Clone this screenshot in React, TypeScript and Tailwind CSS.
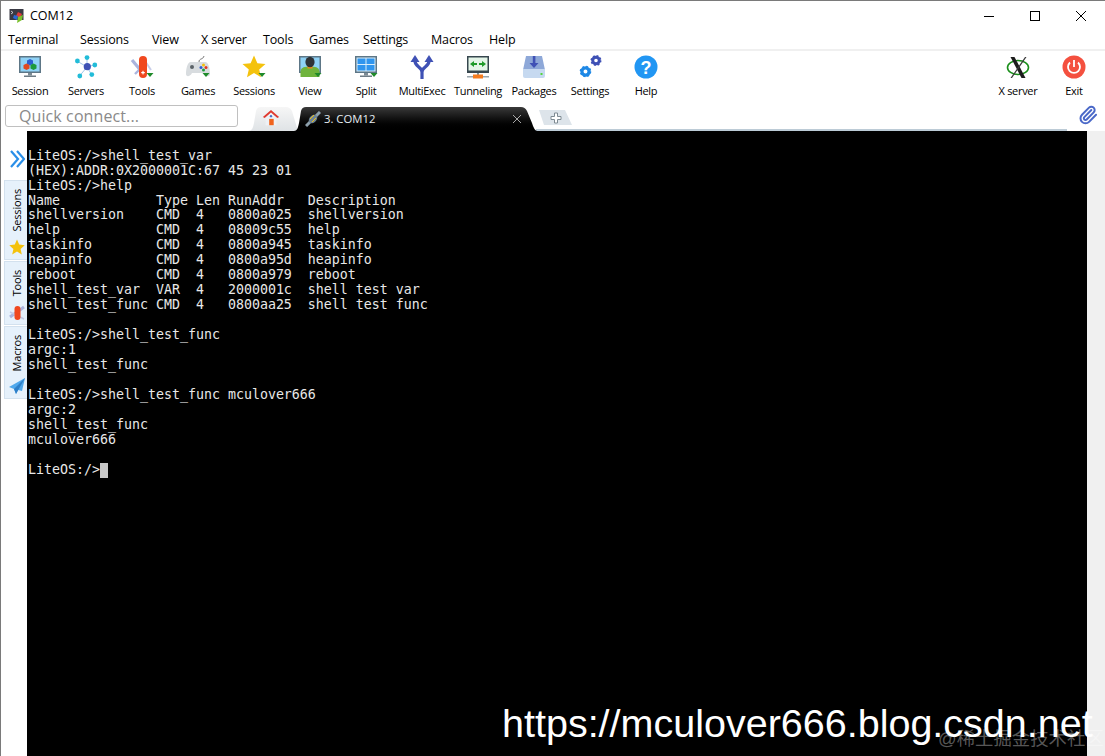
import { Paperclip } from 'lucide-react';
import type { ReactNode } from 'react';

const uiFont = "font-['Open_Sans','Noto_Sans',sans-serif]";

function Tri() {
  return <polygon points="18.5,20 25.5,20 22,24" fill="#1f8a2a" />;
}

function Monitor({ screen, children }: { screen: string; children?: ReactNode }) {
  return (
    <>
      <rect x="3" y="3" width="22" height="17" fill="#5d7686" />
      <rect x="4.5" y="4.5" width="19" height="14" fill={screen} />
      <rect x="12" y="20" width="4" height="2.5" fill="#7d8b94" />
      <rect x="8" y="22.5" width="12" height="1.5" fill="#6e7c85" />
      {children}
    </>
  );
}

function Gear({ cx, cy, r, color }: { cx: number; cy: number; r: number; color: string }) {
  const c = 2 * Math.PI * (r + 1);
  return (
    <g fill="none" stroke={color}>
      <circle cx={cx} cy={cy} r={r} strokeWidth={r * 0.9} />
      <circle cx={cx} cy={cy} r={r + 1} strokeWidth="2.4" strokeDasharray={`${c / 16} ${c / 16}`} />
    </g>
  );
}

const icons: Record<string, ReactNode> = {
  session: (
    <Monitor screen="#8fd2f6">
      <polygon points="14,6 17,7.5 17,11 14,12.5 11,11 11,7.5" fill="#2d5fd0" />
      <polygon points="10.5,10.5 13.5,12 13.5,15.5 10.5,17 7.5,15.5 7.5,12" fill="#e2491f" />
      <polygon points="17.5,10.5 20.5,12 20.5,15.5 17.5,17 14.5,15.5 14.5,12" fill="#1d9a3b" />
    </Monitor>
  ),
  servers: (
    <g>
      <g stroke="#9fc6ea" strokeWidth="1">
        <line x1="15" y1="14" x2="15" y2="4.5" />
        <line x1="15" y1="14" x2="5" y2="8" />
        <line x1="15" y1="14" x2="22" y2="12" />
        <line x1="15" y1="14" x2="19.5" y2="21.5" />
        <line x1="15" y1="14" x2="7.5" y2="23" />
      </g>
      <circle cx="15.3" cy="13.7" r="3.6" fill="#3f51b5" />
      <circle cx="15" cy="4.6" r="2.4" fill="#22bcd8" />
      <circle cx="5.4" cy="8" r="2.4" fill="#22bcd8" />
      <circle cx="22.8" cy="12" r="2.4" fill="#22bcd8" />
      <circle cx="19.8" cy="21.6" r="2.4" fill="#22bcd8" />
      <circle cx="7.8" cy="23" r="2.4" fill="#22bcd8" />
    </g>
  ),
  tools: (
    <g>
      <line x1="4" y1="7" x2="14" y2="19" stroke="#aab4de" strokeWidth="3.2" />
      <line x1="7" y1="21" x2="13" y2="15" stroke="#aab4de" strokeWidth="2.4" />
      <line x1="17" y1="8" x2="23" y2="17" stroke="#c7cde8" strokeWidth="2" />
      <rect x="11" y="3" width="8" height="22" rx="4" fill="#f0481f" />
      <rect x="13.2" y="19" width="3.6" height="1.2" fill="#fff" />
      <rect x="14.4" y="17.8" width="1.2" height="3.6" fill="#fff" />
      <Tri />
    </g>
  ),
  games: (
    <g>
      <path d="M15 9 C15 5 19 7 20 3" fill="none" stroke="#777" strokeWidth="1" />
      <path d="M7 9 H21 C25 9 26 17 26 21 C26 24 22 24 20 20 H8 C6 24 2 24 2 21 C2 17 3 9 7 9 Z" fill="#d8dcdf" />
      <circle cx="8" cy="14" r="2" fill="#5b6268" />
      <circle cx="17" cy="14.5" r="1.5" fill="#2d5fd0" />
      <circle cx="22" cy="14.5" r="1.5" fill="#e2361f" />
      <circle cx="19.5" cy="12" r="1.5" fill="#f4c20d" />
      <circle cx="19.5" cy="17" r="1.5" fill="#1d9a3b" />
      <Tri />
    </g>
  ),
  star: (
    <g>
      <polygon points="14,2.5 17.4,10.2 25.5,11 19.2,16.4 21,24.3 14,20 7,24.3 8.8,16.4 2.5,11 10.6,10.2" fill="#f4c20d" />
      <Tri />
    </g>
  ),
  view: (
    <g>
      <Monitor screen="#8fd2f6">
        <path d="M4.5 18.5 C5 14 9 13.5 14 13.5 C19 13.5 23 14 23.5 18.5 V24 H4.5 Z" fill="#6fb33c" />
        <rect x="11.5" y="12" width="5" height="3.5" fill="#f08a1d" />
        <ellipse cx="14" cy="9" rx="4.6" ry="5.2" fill="#2f3337" />
      </Monitor>
      <Tri />
    </g>
  ),
  split: (
    <g>
      <Monitor screen="#d8ecf9">
        <rect x="5.5" y="5.5" width="8" height="5.5" fill="#2f95ee" />
        <rect x="14.5" y="5.5" width="8" height="5.5" fill="#2f95ee" />
        <rect x="5.5" y="12" width="8" height="5.5" fill="#2f95ee" />
        <rect x="14.5" y="12" width="8" height="5.5" fill="#2f95ee" />
      </Monitor>
      <Tri />
    </g>
  ),
  multiexec: (
    <g fill="#3f51b5">
      <path d="M7 8 C7 14 14 14 14 19 V26 M21 8 C21 14 14 14 14 19" fill="none" stroke="#3f51b5" strokeWidth="3.2" />
      <polygon points="7,2 11.5,9 2.5,9" />
      <polygon points="21,2 25.5,9 16.5,9" />
    </g>
  ),
  tunneling: (
    <g>
      <rect x="3" y="3" width="22" height="17" fill="#37474f" />
      <rect x="4.5" y="4.5" width="19" height="13" fill="#e4f5e8" />
      <polygon points="6,11 10,8 10,10 13,10 13,12 10,12 10,14" fill="#1f9a2a" />
      <polygon points="22,11 18,8 18,10 15,10 15,12 18,12 18,14" fill="#1f9a2a" />
      <rect x="13" y="20" width="2" height="2" fill="#78909c" />
      <rect x="3" y="23" width="22" height="1.5" fill="#9aa5ac" />
      <rect x="9" y="21.5" width="10" height="4" fill="#f57c1f" />
    </g>
  ),
  packages: (
    <g>
      <path d="M6 3 H22 L25 17 H3 Z" fill="#8ea8d8" />
      <path d="M3 16 H25 V23 Q25 25 23 25 H5 Q3 25 3 23 Z" fill="#c6d9f0" />
      <rect x="12.8" y="3" width="2.6" height="8" fill="#3f51b5" />
      <polygon points="9.5,10 18.5,10 14,15" fill="#3f51b5" />
      <rect x="20.5" y="20" width="2" height="2" fill="#55d63c" />
    </g>
  ),
  settings: (
    <g>
      <Gear cx={9.5} cy={18.5} r={3.6} color="#1e88e5" />
      <Gear cx={20} cy={7.5} r={3.3} color="#3f51b5" />
    </g>
  ),
  help: (
    <g>
      <circle cx="14" cy="14" r="11.5" fill="#2196f3" />
      <text x="14" y="20.5" textAnchor="middle" fontSize="18" fontWeight="700" fill="#fff" fontFamily="'Liberation Sans',sans-serif">?</text>
    </g>
  ),
  xserver: (
    <g>
      <ellipse cx="14" cy="14.5" rx="10.5" ry="7" fill="none" stroke="#1b8f1b" strokeWidth="1.6" />
      <path d="M6.5 4 L10.5 4 L21.5 25 L17.5 25 Z" fill="#1c1c1c" />
      <path d="M21 4 L22.5 4 L8 25 L6.5 25 Z" fill="#3a3a3a" />
    </g>
  ),
  exit: (
    <g>
      <circle cx="14" cy="14" r="11.5" fill="#f4503f" />
      <path d="M10 9.5 A6 6 0 1 0 18 9.5" fill="none" stroke="#fff" strokeWidth="1.8" />
      <line x1="14" y1="7" x2="14" y2="14" stroke="#fff" strokeWidth="1.8" />
    </g>
  ),
};

const menu = [
  { label: 'Terminal', w: 'w-[72px]' },
  { label: 'Sessions', w: 'w-[72px]' },
  { label: 'View', w: 'w-[49px]' },
  { label: 'X server', w: 'w-[62px]' },
  { label: 'Tools', w: 'w-[46px]' },
  { label: 'Games', w: 'w-[54px]' },
  { label: 'Settings', w: 'w-[68px]' },
  { label: 'Macros', w: 'w-[58px]' },
  { label: 'Help', w: 'w-[40px]' },
];

const tools = [
  ['Session', 'session'],
  ['Servers', 'servers'],
  ['Tools', 'tools'],
  ['Games', 'games'],
  ['Sessions', 'star'],
  ['View', 'view'],
  ['Split', 'split'],
  ['MultiExec', 'multiexec'],
  ['Tunneling', 'tunneling'],
  ['Packages', 'packages'],
  ['Settings', 'settings'],
  ['Help', 'help'],
];

const terminal = `LiteOS:/>shell_test_var
(HEX):ADDR:0X2000001C:67 45 23 01
LiteOS:/>help
Name            Type Len RunAddr   Description
shellversion    CMD  4   0800a025  shellversion
help            CMD  4   08009c55  help
taskinfo        CMD  4   0800a945  taskinfo
heapinfo        CMD  4   0800a95d  heapinfo
reboot          CMD  4   0800a979  reboot
shell_test_var  VAR  4   2000001c  shell test var
shell_test_func CMD  4   0800aa25  shell test func

LiteOS:/>shell_test_func
argc:1
shell_test_func

LiteOS:/>shell_test_func mculover666
argc:2
shell_test_func
mculover666

LiteOS:/>`;

function ToolButton({ label, icon }: { label: string; icon: string }) {
  return (
    <div className="w-14 flex flex-col items-center">
      <svg viewBox="0 0 28 28" className="w-7 h-7">
        {icons[icon]}
      </svg>
      <span className="mt-[2px] text-[11px] leading-[16px] text-black tracking-[-0.3px]">{label}</span>
    </div>
  );
}

function SideTab({ label, h, children }: { label: string; h: string; children: ReactNode }) {
  return (
    <div className={`${h} ml-[3px] w-6 flex flex-col items-center bg-[#e6f1fb] border border-[#d3e1ee] border-r-0`}>
      <span className="mt-2 [writing-mode:vertical-rl] rotate-180 text-[11px] leading-[20px] text-black tracking-[-0.2px]">{label}</span>
      <div className="mt-auto mb-1">{children}</div>
    </div>
  );
}

export default function App() {
  return (
    <div className={`relative h-screen w-full overflow-hidden flex flex-col bg-white border-l border-t border-[#7a7a7a] ${uiFont}`}>
      <div className="h-[30px] flex items-center">
        <svg viewBox="0 0 16 16" className="ml-[8px] w-4 h-4">
          <rect x="0.5" y="1" width="14" height="11" fill="#3a3a44" />
          <path d="M2 3 L4 4.5 L2 6" fill="none" stroke="#fff" strokeWidth="0.7" />
          <polygon points="9,4 13,6 11,10 7,8" fill="#e23a3a" />
          <polygon points="5,7 9,8 8,12 4,10" fill="#2a6ad8" />
          <polygon points="9,9 14,7 13,12 8,15" fill="#7cc12f" />
        </svg>
        <span className="ml-[5px] text-[12.5px] text-black">COM12</span>
        <div className="ml-auto pr-px flex">
          <div className="w-[46px] h-[30px] flex items-center justify-center">
            <div className="w-[10px] h-px bg-black" />
          </div>
          <div className="w-[46px] h-[30px] flex items-center justify-center">
            <div className="w-[10px] h-[10px] border border-black" />
          </div>
          <div className="w-[46px] h-[30px] flex items-center justify-center">
            <svg viewBox="0 0 10 10" className="w-[10px] h-[10px]">
              <path d="M0 0 L10 10 M10 0 L0 10" stroke="#000" strokeWidth="1" />
            </svg>
          </div>
        </div>
      </div>

      <div className="h-[18px] pl-[7px] flex items-center border-b-2 border-[#f0f0f0] box-content">
        {menu.map(m => (
          <span key={m.label} className={`${m.w} shrink-0 text-[12.5px] leading-[18px] text-black tracking-[-0.15px]`}>
            {m.label}
          </span>
        ))}
      </div>

      <div className="h-[53px] pl-px pr-[3px] pt-[2px] flex justify-between">
        <div className="flex">
          {tools.map(([label, icon]) => (
            <ToolButton key={label + icon} label={label} icon={icon} />
          ))}
        </div>
        <div className="flex">
          <ToolButton label="X server" icon="xserver" />
          <ToolButton label="Exit" icon="exit" />
        </div>
      </div>

      <div className="h-[27px] flex items-end">
        <div className="ml-[4px] mb-[4px] w-[233px] h-[22px] rounded-[3px] border border-[#c0c0c0] pl-[13px] flex items-center text-[16px] tracking-[0.1px] text-[#8a8a8a]">
          Quick connect...
        </div>
        <div className="ml-[10px] w-[50px] h-[24px] pr-[4px] flex justify-center bg-gradient-to-b from-[#f6f6f6] to-[#dfe3e6] [clip-path:path('M0_24_C4_24_5_21_6_16_L8_4_Q9_0_13_0_L38_0_Q42_0_44_4_L50_24_Z')]">
          <svg viewBox="0 0 20 20" className="w-[18px] h-[18px] mt-[2px]">
            <polygon points="10,1 19,9 17,10 10,4 3,10 1,9" fill="#e03a30" />
            <polygon points="4,10 10,5 16,10 16,18 4,18" fill="#eef1f5" />
            <rect x="8" y="11" width="5" height="7" fill="#f0641e" />
            <circle cx="10" cy="8" r="1.3" fill="#4a6fc8" />
          </svg>
        </div>
        <div className="-ml-[4px] w-[243px] h-[24px] shrink-0 flex items-center bg-gradient-to-b from-[#3a3a3a] to-black [clip-path:path('M0_24_C3_24_4_21_5_16_L7_4_Q8_0_12_0_L227_0_Q231_0_233_4_L238_16_Q240_23_243_24_Z')]">
          <svg viewBox="0 0 16 16" className="ml-[11px] w-4 h-4">
            <line x1="1" y1="15" x2="15" y2="1" stroke="#8da0ac" strokeWidth="3" />
            <ellipse cx="8" cy="8" rx="5" ry="3.4" transform="rotate(-45 8 8)" fill="#6e8494" />
            <line x1="5" y1="8" x2="9" y2="4" stroke="#f4c20d" strokeWidth="1" />
            <line x1="7" y1="11" x2="11" y2="7" stroke="#f4c20d" strokeWidth="1" />
          </svg>
          <span className="ml-[3px] text-[11.3px] text-[#e6edf2]">3. COM12</span>
          <svg viewBox="0 0 8 8" className="ml-auto mr-[16px] w-2 h-2">
            <path d="M0 0 L8 8 M8 0 L0 8" stroke="#a8a8a8" strokeWidth="1" />
          </svg>
        </div>
        <div className="flex-1 h-[24px] border-b-2 border-[#bccbd6] -ml-[1px] pl-[3px] pt-[3px]">
          <div className="w-[33px] h-[15px] flex items-center justify-center bg-[#dde4ea] [clip-path:polygon(0_0,26px_0,33px_100%,5px_100%)]">
            <svg viewBox="0 0 12 12" className="w-3 h-3">
              <path d="M4.5 1 H7.5 V4.5 H11 V7.5 H7.5 V11 H4.5 V7.5 H1 V4.5 H4.5 Z" fill="#fff" stroke="#7e8a92" strokeWidth="1" />
            </svg>
          </div>
        </div>
        <div className="w-[38px] h-[27px] pb-[5px] flex items-center justify-end pr-[7px]">
          <Paperclip size={20} strokeWidth={2.4} className="text-[#4a68c8]" />
        </div>
      </div>

      <div className="flex-1 flex min-h-0">
        <div className="w-[26px] shrink-0 flex flex-col bg-white">
          <div className="h-[49px] pl-[8px] pt-[19px]">
            <svg viewBox="0 0 16 18" className="w-4 h-[18px]">
              <path d="M2 1 L9 9 L2 17 M8 1 L15 9 L8 17" fill="none" stroke="#2a8fe8" strokeWidth="2.2" />
            </svg>
          </div>
          <SideTab label="Sessions" h="h-[80px]">
            <svg viewBox="0 0 16 16" className="w-4 h-4">
              <polygon points="8,0.5 10.2,5.6 15.7,6.2 11.6,9.9 12.8,15.4 8,12.6 3.2,15.4 4.4,9.9 0.3,6.2 5.8,5.6" fill="#f4c20d" />
            </svg>
          </SideTab>
          <SideTab label="Tools" h="h-[64px] mt-px">
            <svg viewBox="0 0 16 16" className="w-4 h-4">
              <line x1="1" y1="13" x2="15" y2="3" stroke="#aab4de" strokeWidth="3" />
              <line x1="1" y1="8" x2="15" y2="15" stroke="#c3cae6" strokeWidth="1.5" />
              <rect x="5.5" y="2" width="6" height="14" rx="3" fill="#f0481f" />
            </svg>
          </SideTab>
          <SideTab label="Macros" h="h-[73px] mt-px">
            <svg viewBox="0 0 16 16" className="w-4 h-4">
              <polygon points="16,0 0,9 5,11 7,16 9,12 13,13" fill="#4fa8ec" />
              <polygon points="16,0 5,11 7,16" fill="#2d7fc8" />
            </svg>
          </SideTab>
        </div>
        <pre className="flex-1 min-w-0 bg-black pl-px pt-[17.68px] font-['DejaVu_Sans_Mono',monospace] text-[13.29px] leading-[14.95px] text-[#e8e8e8]">
          {terminal}
          <span className="inline-block w-2 h-[15px] align-top bg-[#c8c8c8]" />
        </pre>
        <div className="w-[18px] shrink-0 bg-[#f0f0f0]" />
      </div>

      <span className="absolute left-[501px] top-[698px] font-['Liberation_Sans',sans-serif] text-[39.5px] leading-[48px] text-white whitespace-nowrap">
        https://mculover666.blog.csdn.net
      </span>
      <span className="absolute left-[937px] top-[727px] font-['Liberation_Sans','Noto_Sans_CJK_SC',sans-serif] text-[18.4px] leading-[22px] text-white/35 whitespace-nowrap">
        @稀土掘金技术社区
      </span>
    </div>
  );
}
